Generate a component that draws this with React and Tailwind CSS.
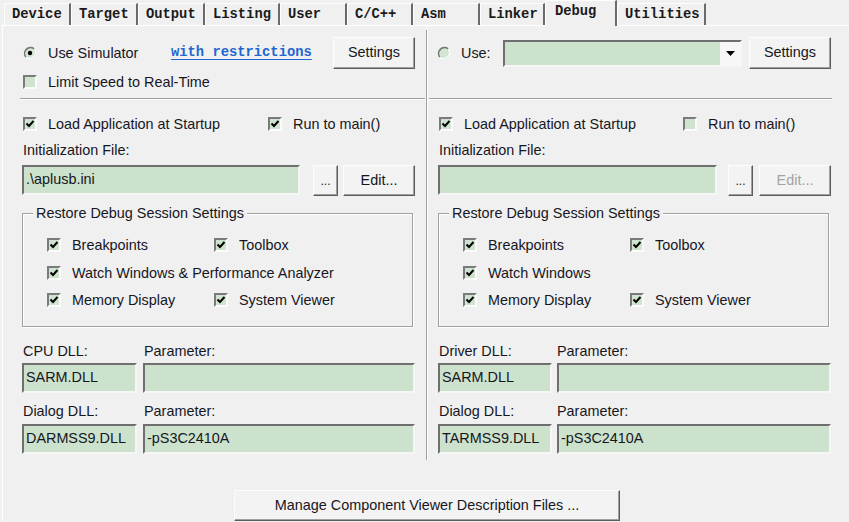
import React from "react";

const TABS = [
  { label: "Device", w: "w-[67px]" },
  { label: "Target", w: "w-[67px]" },
  { label: "Output", w: "w-[67px]" },
  { label: "Listing", w: "w-[75px]" },
  { label: "User", w: "w-[67px]" },
  { label: "C/C++", w: "w-[66px]" },
  { label: "Asm", w: "w-[67px]" },
  { label: "Linker", w: "w-[65px]" },
  { label: "Debug", w: "w-[72px]", active: true },
  { label: "Utilities", w: "w-[89px]" },
];

const CheckBox = ({ checked }) => (
  <span className="w-[14px] h-[14px] shrink-0 flex items-center justify-center bg-[#cfe4cf] border-2 border-t-[#7a7a7a] border-l-[#7a7a7a] border-r-[#fbfbfb] border-b-[#fbfbfb]">
    {checked && (
      <svg width="10" height="10" viewBox="0 0 10 10">
        <path d="M1.5 4.5 L4 7 L8.5 2" fill="none" stroke="#000" strokeWidth="2" />
      </svg>
    )}
  </span>
);

const Check = ({ checked, label, className = "" }) => (
  <div className={`flex items-center h-[16px] ${className}`}>
    <span className="ml-[1px]">
      <CheckBox checked={checked} />
    </span>
    <span className="ml-[11px] leading-[16px] whitespace-nowrap">{label}</span>
  </div>
);

const Radio = ({ checked }) => (
  <svg width="14" height="14" viewBox="0 0 14 14" className="shrink-0">
    <circle cx="7" cy="7" r="6" fill="#d3e6d3" />
    <path d="M2.8 11.2 A6 6 0 0 1 11.2 2.8" stroke="#777" strokeWidth="1.6" fill="none" />
    <path d="M11.2 2.8 A6 6 0 0 1 2.8 11.2" stroke="#fff" strokeWidth="1.2" fill="none" />
    {checked && <circle cx="7" cy="7" r="2.2" fill="#000" />}
  </svg>
);

const Field = ({ children, className = "" }) => (
  <div
    className={`h-[30px] flex items-center pl-[2px] bg-[#cce2cc] border-2 border-t-[#6f6f6f] border-l-[#6f6f6f] border-r-[#f6f6f6] border-b-[#f6f6f6] whitespace-nowrap overflow-hidden ${className}`}
  >
    {children}
  </div>
);

const Btn = ({ children, className = "", disabled }) => (
  <div
    className={`flex items-center justify-center bg-[#f3f3f3] border border-t-[#fdfdfd] border-l-[#fdfdfd] border-r-[#5c5c5c] border-b-[#5c5c5c] shadow-[inset_-1px_-1px_0_#a0a0a0] ${
      disabled ? "text-[#a3a3a3]" : ""
    } ${className}`}
  >
    {children}
  </div>
);

const Separator = ({ className }) => (
  <div className={`h-[2px] border-t border-t-[#a0a0a0] border-b border-b-white ${className}`} />
);

const Group = ({ children }) => (
  <div className="relative mt-[17px] w-[391px] h-[114px] border border-[#a0a0a0] shadow-[inset_1px_1px_0_#fff,1px_1px_0_#fff] pt-[23px] pl-[23px]">
    <span className="absolute -top-[9px] left-[10px] px-[3px] bg-[#f0f0f0] leading-[16px]">
      Restore Debug Session Settings
    </span>
    {children}
  </div>
);

const DllBlock = ({ first, dialog, firstW, labelW, gap }) => (
  <>
    <div className="mt-[16px] h-[16px] flex leading-[16px] pl-[1px]">
      <span className={labelW}>{first}</span>
      <span>Parameter:</span>
    </div>
    <div className={`mt-[4px] flex ${gap}`}>
      <Field className={firstW}>SARM.DLL</Field>
      <Field className="flex-1" />
    </div>
    <div className="mt-[10px] h-[16px] flex leading-[16px] pl-[1px]">
      <span className={labelW}>Dialog DLL:</span>
      <span>Parameter:</span>
    </div>
    <div className={`mt-[5px] flex ${gap}`}>
      <Field className={firstW}>{dialog}</Field>
      <Field className="flex-1">-pS3C2410A</Field>
    </div>
  </>
);

export default function App() {
  return (
    <div className="w-[849px] h-[522px] overflow-hidden bg-[#f0f0f0] font-['Liberation_Sans',Arial,sans-serif] text-[14.4px] text-[#16161e]">
      {/* tab strip */}
      <div className="relative z-10 h-[25px] flex items-end pl-[4px] font-['Liberation_Mono',monospace] font-bold text-[13.8px] text-[#1a1a1a]">
        {TABS.map((t) =>
          t.active ? (
            <div
              key={t.label}
              className={`${t.w} h-[26px] -mb-[1px] pl-[9px] pt-[3px] bg-[#f0f0f0] border-t border-l border-white border-r-2 border-r-[#6a6a6a] rounded-tl-[2px] leading-[16px]`}
            >
              {t.label}
            </div>
          ) : (
            <div
              key={t.label}
              className={`${t.w} h-[22px] pl-[7px] pt-[2px] flex items-center border-t border-l border-white border-r-2 border-r-[#6a6a6a] rounded-tl-[2px]`}
            >
              {t.label}
            </div>
          )
        )}
      </div>

      {/* tab page */}
      <div className="ml-[2px] border-t border-l border-white">
        <div className="flex">
          {/* simulator side */}
          <div className="w-[423px] pl-[19px] pb-[6px]">
            <div className="w-[393px]">
              <div className="mt-[11px] h-[32px] flex items-center">
                <div className="w-[149px] flex items-center">
                  <span className="ml-[1px] flex">
                    <Radio checked />
                  </span>
                  <span className="ml-[11px] leading-[16px]">Use Simulator</span>
                </div>
                <span className="font-['Liberation_Mono',monospace] font-bold text-[13.8px] text-[#1f66d1] underline underline-offset-[3px]">
                  with restrictions
                </span>
                <Btn className="ml-auto w-[82px] h-[32px]">Settings</Btn>
              </div>
              <Check className="mt-[5px]" label="Limit Speed to Real-Time" />
              <Separator className="mt-[8px] -ml-[2px] w-[405px]" />
              <div className="mt-[16px] flex">
                <div className="w-[245px]">
                  <Check checked label="Load Application at Startup" />
                </div>
                <Check checked label="Run to main()" />
              </div>
              <div className="mt-[10px] h-[16px] leading-[16px] pl-[1px]">Initialization File:</div>
              <div className="mt-[7px] flex items-start h-[31px]">
                <Field className="w-[278px]">.\aplusb.ini</Field>
                <Btn className="ml-[13px] w-[25px] h-[31px] items-end pb-[5px] text-[12px]">...</Btn>
                <Btn className="ml-[5px] w-[72px] h-[31px]">Edit...</Btn>
              </div>
              <Group>
                <div className="flex">
                  <div className="w-[167px]">
                    <Check checked label="Breakpoints" />
                  </div>
                  <Check checked label="Toolbox" />
                </div>
                <Check checked className="mt-[12px]" label="Watch Windows & Performance Analyzer" />
                <div className="mt-[11px] flex">
                  <div className="w-[167px]">
                    <Check checked label="Memory Display" />
                  </div>
                  <Check checked label="System Viewer" />
                </div>
              </Group>
              <DllBlock first="CPU DLL:" dialog="DARMSS9.DLL" firstW="w-[115px]" labelW="w-[121px]" gap="gap-[6px]" />
            </div>
          </div>

          {/* divider */}
          <div className="w-[2px] mt-[4px] border-l border-l-[#a0a0a0] border-r border-r-white" />

          {/* target side */}
          <div className="w-[421px] pl-[10px] pb-[6px]">
            <div className="w-[393px]">
              <div className="mt-[11px] h-[32px] flex items-center">
                <span className="-ml-[1px] flex">
                  <Radio />
                </span>
                <span className="ml-[10px] leading-[16px]">Use:</span>
                <div className="ml-auto w-[239px] h-[27px] flex justify-end bg-[#cce2cc] border-2 border-t-[#6f6f6f] border-l-[#6f6f6f] border-r-[#f6f6f6] border-b-[#f6f6f6]">
                  <div className="w-[21px] h-full flex items-center justify-center bg-[#f7f7f7] border-l border-l-[#d8d8d8]">
                    <svg width="9" height="5" viewBox="0 0 9 5">
                      <path d="M0 0 H9 L4.5 5 Z" fill="#000" />
                    </svg>
                  </div>
                </div>
                <Btn className="ml-[7px] w-[82px] h-[32px]">Settings</Btn>
              </div>
              <div className="h-[21px]" />
              <Separator className="mt-[8px] -ml-[9px] w-[403px]" />
              <div className="mt-[16px] flex">
                <div className="w-[244px]">
                  <Check checked label="Load Application at Startup" />
                </div>
                <Check label="Run to main()" />
              </div>
              <div className="mt-[10px] h-[16px] leading-[16px] pl-[1px]">Initialization File:</div>
              <div className="mt-[7px] flex items-start h-[31px]">
                <Field className="w-[279px]" />
                <Btn className="ml-[11px] w-[25px] h-[31px] items-end pb-[5px] text-[12px]">...</Btn>
                <Btn disabled className="ml-[6px] w-[72px] h-[31px]">
                  Edit...
                </Btn>
              </div>
              <Group>
                <div className="flex">
                  <div className="w-[167px]">
                    <Check checked label="Breakpoints" />
                  </div>
                  <Check checked label="Toolbox" />
                </div>
                <Check checked className="mt-[12px]" label="Watch Windows" />
                <div className="mt-[11px] flex">
                  <div className="w-[167px]">
                    <Check checked label="Memory Display" />
                  </div>
                  <Check checked label="System Viewer" />
                </div>
              </Group>
              <DllBlock first="Driver DLL:" dialog="TARMSS9.DLL" firstW="w-[114px]" labelW="w-[118px]" gap="gap-[5px]" />
            </div>
          </div>
        </div>

        <Btn className="mt-[30px] ml-[231px] w-[386px] h-[31px]">Manage Component Viewer Description Files ...</Btn>
      </div>
    </div>
  );
}
